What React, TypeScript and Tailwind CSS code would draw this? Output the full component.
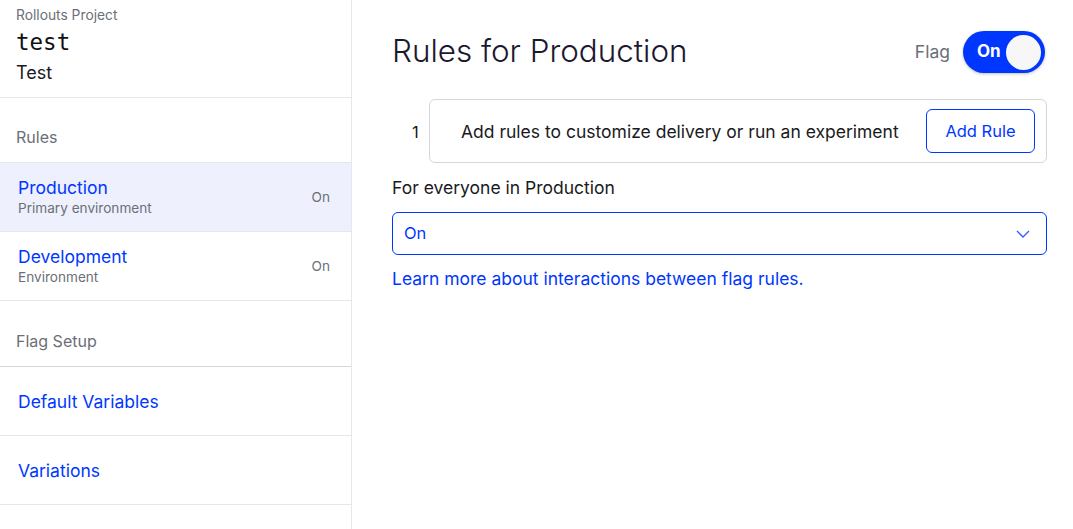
import React from "react";

const BLUE = "text-[#0037ff]";

const EnvRow = ({ name, sub, active }: { name: string; sub: string; active?: boolean }) => (
  <div
    className={`flex h-[69px] items-center justify-between border-b border-[#e5e7eb] pl-[18px] pr-[21px] ${
      active ? "bg-[#eef1fd]" : "bg-white"
    }`}
  >
    <div className="flex flex-col">
      <span className={`text-[17.5px] leading-[22px] ${BLUE}`}>{name}</span>
      <span className="text-[13.6px] leading-[19px] text-[#6b6f78]">{sub}</span>
    </div>
    <span className="text-[13.6px] text-[#6b6f78]">On</span>
  </div>
);

const SetupRow = ({ label }: { label: string }) => (
  <div className={`flex h-[69px] items-center border-b border-[#e5e7eb] pl-[18px] pt-[2px] text-[17.5px] ${BLUE}`}>
    {label}
  </div>
);

export default function App() {
  return (
    <div className="flex h-[529px] w-[1073px] bg-white font-['Inter',sans-serif] text-[#1a1a22]">
      {/* Sidebar */}
      <aside className="flex w-[352px] shrink-0 flex-col border-r border-[#e5e7eb]">
        <div className="flex h-[98px] flex-col border-b border-[#e5e7eb] pl-[16px] pt-[6px]">
          <span className="text-[13.8px] leading-[18px] text-[#6b6f78]">Rollouts Project</span>
          <span className="font-['DejaVu_Sans_Mono',monospace] text-[22.5px] leading-[36px] text-[#111]">test</span>
          <span className="text-[18px] leading-[26px] text-[#1a1a22]">Test</span>
        </div>
        <div className="flex h-[65px] items-end border-b border-[#e5e7eb] pb-[13px] pl-[16px] text-[16px] leading-[24px] text-[#6b6f78]">
          Rules
        </div>
        <EnvRow name="Production" sub="Primary environment" active />
        <EnvRow name="Development" sub="Environment" />
        <div className="flex h-[66px] items-end border-b border-[#d4d6da] pb-[13px] pl-[16px] text-[16px] leading-[24px] text-[#6b6f78]">
          Flag Setup
        </div>
        <SetupRow label="Default Variables" />
        <SetupRow label="Variations" />
      </aside>

      {/* Main */}
      <main className="flex flex-1 flex-col pl-[40px] pr-[26px] pt-[31px]">
        <div className="flex h-[42px] items-center justify-between">
          <h1 className="font-['Inter_Light','Inter',sans-serif] text-[31.4px] font-light leading-none text-[#1c1830]">
            Rules for Production
          </h1>
          <div className="mr-[2px] flex items-center gap-[13px]">
            <span className="text-[17.5px] text-[#6b6f78]">Flag</span>
            <div className="flex h-[42px] w-[82px] items-center justify-between rounded-full bg-[#0037ff] pl-[14px] pr-[4px] shadow-[0_1px_3px_rgba(0,0,0,0.25)]">
              <span className="text-[17px] font-bold text-white">On</span>
              <span className="h-[35px] w-[35px] rounded-full bg-[#f7f7f8]" />
            </div>
          </div>
        </div>

        <div className="mt-[26px] flex items-center">
          <span className="w-[37px] pl-[20px] pt-[2px] text-[16.5px]">1</span>
          <div className="flex h-[64px] flex-1 items-center justify-between rounded-[6px] border border-[#d4d6da] pl-[31px] pr-[11px]">
            <span className="pt-[2px] text-[17.5px]">Add rules to customize delivery or run an experiment</span>
            <button className={`h-[44px] w-[109px] rounded-[6px] border border-[#0037ff] text-[16.5px] ${BLUE}`}>
              Add Rule
            </button>
          </div>
        </div>

        <div className="mt-[14px] text-[17.5px] leading-[22px]">For everyone in Production</div>

        <div className="mt-[13px] flex h-[43px] items-center justify-between rounded-[6px] border border-[#0037ff] pl-[11px] pr-[16px]">
          <span className={`text-[16.5px] ${BLUE}`}>On</span>
          <svg width="14" height="8" viewBox="0 0 14 8" fill="none">
            <path d="M1 1l6 6 6-6" stroke="#3a5bff" strokeWidth="1.4" />
          </svg>
        </div>

        <a className={`mt-[12px] text-[17.5px] leading-[24px] ${BLUE}`}>
          Learn more about interactions between flag rules.
        </a>
      </main>
    </div>
  );
}
